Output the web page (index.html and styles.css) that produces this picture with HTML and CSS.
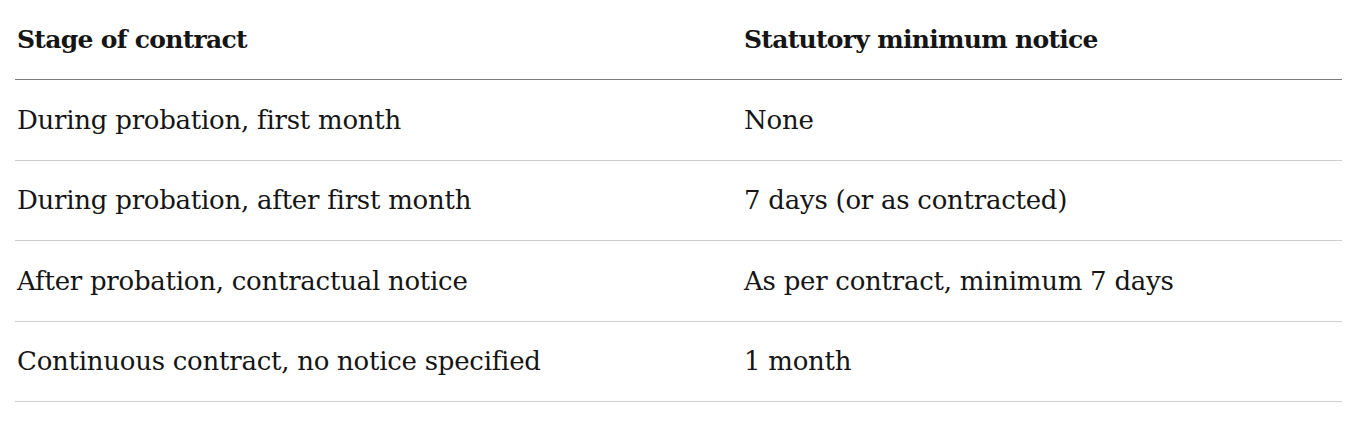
FILE: index.html
```html
<!DOCTYPE html>
<html>
<head>
<meta charset="utf-8">
<link rel="stylesheet" href="styles.css">
</head>
<body>
<table class="notice-table">
  <thead>
    <tr><th class="col-stage">Stage of contract</th><th class="col-notice">Statutory minimum notice</th></tr>
  </thead>
  <tbody>
    <tr><td>During probation, first month</td><td>None</td></tr>
    <tr><td>During probation, after first month</td><td>7 days (or as contracted)</td></tr>
    <tr><td>After probation, contractual notice</td><td>As per contract, minimum 7 days</td></tr>
    <tr><td>Continuous contract, no notice specified</td><td>1 month</td></tr>
  </tbody>
</table>
</body>
</html>
```
FILE: styles.css
```css
html, body {
  margin: 0;
  padding: 0;
  background: #fff;
}
body {
  padding: 0 22px 0 15px;
  font-family: "DejaVu Serif", "Liberation Serif", serif;
  color: #151515;
}
.notice-table {
  width: 100%;
  border-collapse: collapse;
  table-layout: fixed;
}
.col-stage { width: 723px; }
.notice-table th {
  text-align: left;
  font-weight: 700;
  font-size: 25px;
  letter-spacing: -0.7px;
  height: 79px;
  padding: 0 2px;
  vertical-align: middle;
  border-bottom: 1px solid #7a7a7a;
}
.notice-table td {
  font-size: 26px;
  letter-spacing: -0.25px;
  height: 79.5px;
  padding: 0 2px;
  vertical-align: middle;
  border-bottom: 1px solid #cdcdcd;
}
```
